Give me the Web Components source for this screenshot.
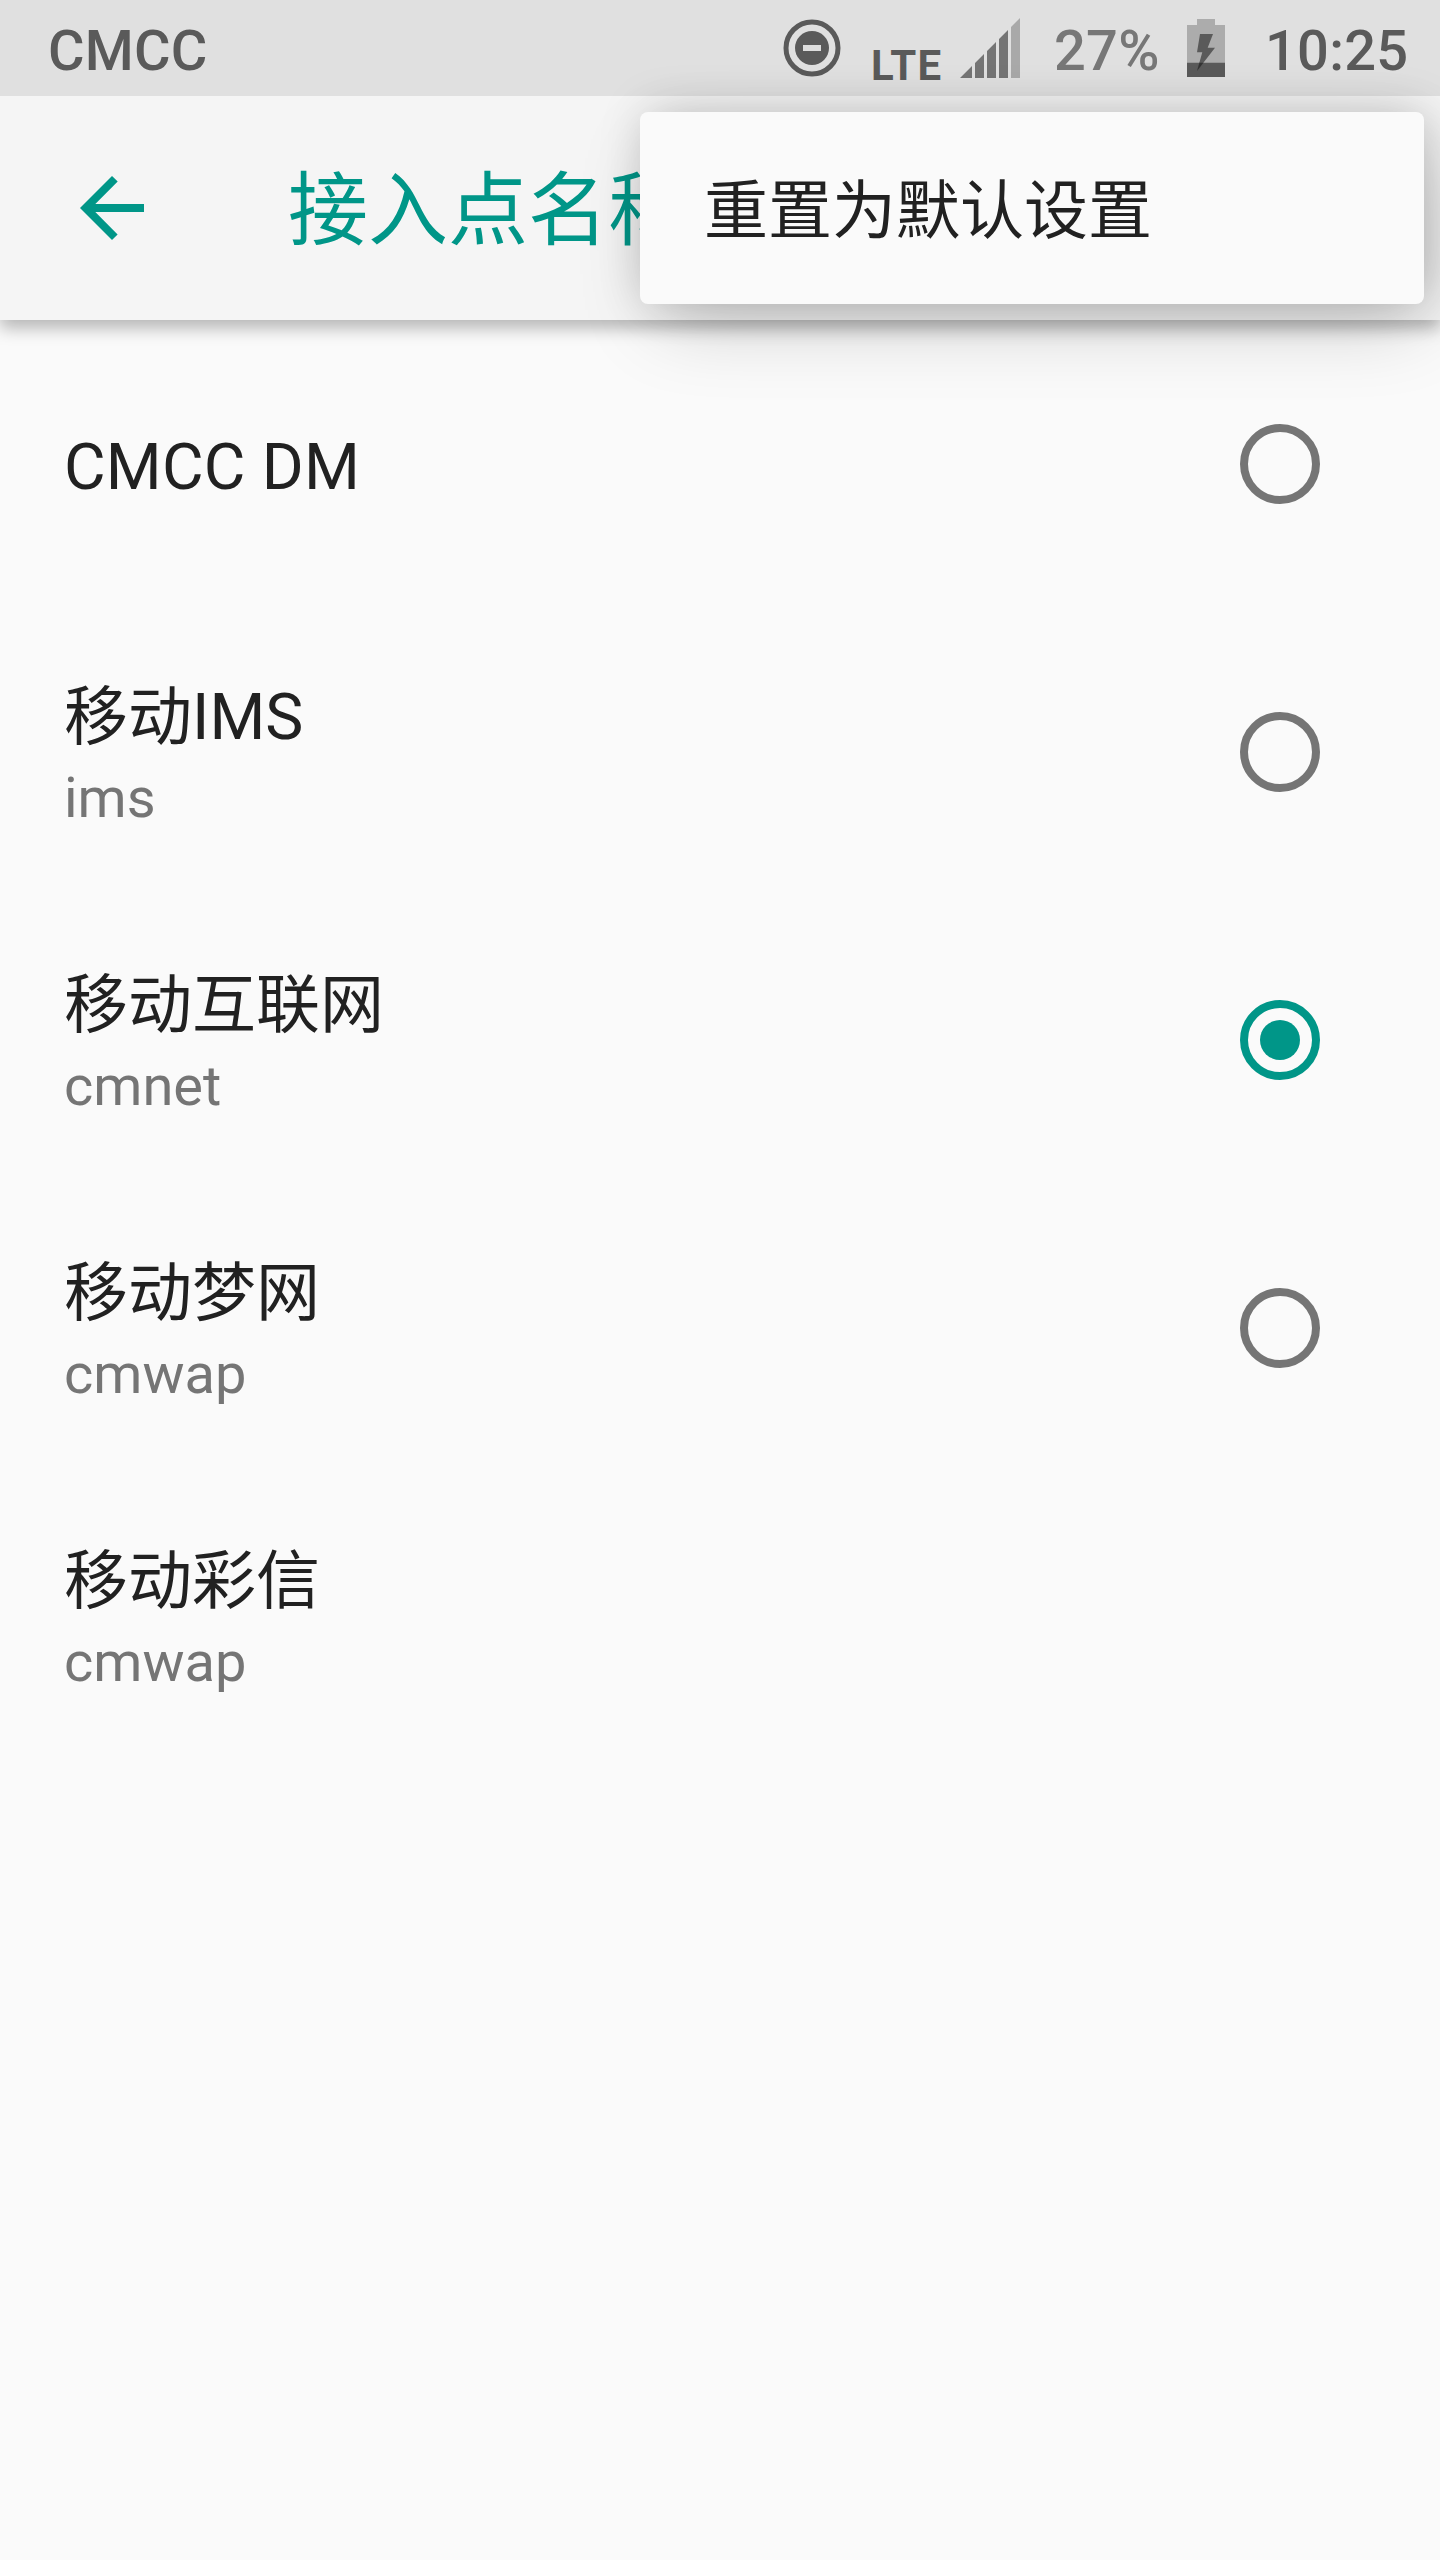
<!DOCTYPE html>
<html lang="zh-CN"><head><meta charset="utf-8"><title>接入点名称</title>
<style>html,body{margin:0;background:#fafafa}body{width:1440px;height:2560px;overflow:hidden;font-family:Roboto,"Noto Sans CJK SC",sans-serif}</style></head><body>
<apn-screen></apn-screen>
<script>
const define=(name,html,fn)=>customElements.define(name,class extends HTMLElement{connectedCallback(){const r=this.attachShadow({mode:'open'});r.innerHTML=html;if(fn)fn(this,r);}});
define('status-bar',`<style>
:host{display:flex;height:96px;background:#e0e0e0;color:#5a5a5a;box-sizing:border-box;padding:0 32px 0 48px;align-items:center;font-size:56px;font-weight:500;line-height:66px;white-space:nowrap}
.sp{flex:1}svg{display:block;flex:none}.c{padding-top:5px;letter-spacing:.25px}.time{width:143px}
.dnd{margin-right:30px}.lte{font-size:42px;font-weight:700;line-height:44px;padding-top:35px;width:89px;letter-spacing:1.2px}.sig{margin-right:34px}.pct{color:#777;padding-top:5px;width:133px;letter-spacing:.25px}.bat{margin-right:40px}
</style><span class="c">CMCC</span><span class="sp"></span>
<svg class="dnd" width="58" height="58" viewBox="0 0 58 58"><circle cx="29" cy="29" r="26" fill="none" stroke="#5a5a5a" stroke-width="5"/><circle cx="29" cy="29" r="17" fill="#5a5a5a"/><rect x="20" y="26" width="18" height="6" fill="#ddd"/></svg>
<span class="lte">LTE</span>
<svg class="sig" width="60" height="60" viewBox="0 0 60 60"><path d="M0 60 12 48V60ZM15 45 24 36V60H15ZM27 33 36 24V60H27ZM39 21 48 12V60H39Z" fill="#757575"/><path d="M51 9 60 0V60H51Z" fill="#a9a9a9"/></svg>
<span class="pct">27%</span>
<svg class="bat" width="38" height="58" viewBox="0 0 38 58"><path d="M0 6H10V0H28V6H38V58H0Z" fill="#acacac"/><path d="M0 43.700H38V58H0Z" fill="#5a5a5a"/><path d="M13 15H26L20.700 28.700H28L10 52 15.300 33.300H10Z" fill="#5a5a5a"/><path d="M12.400 43.700H16.400L10 52Z" fill="#333"/></svg>
<span class="c time">10:25</span>`);
define('app-bar',`<style>
:host{display:flex;position:relative;height:224px;background:#f5f5f5;box-shadow:0 8px 16px rgba(0,0,0,.28);clip-path:inset(0 0 -60px 0);align-items:center;color:#009688}
svg{display:block;margin-left:80px}h1{margin:0 0 0 144px;padding-top:6px;font-size:80px;font-weight:400;line-height:94px}
</style><svg width="64" height="64" viewBox="0 0 64 64"><path d="M64 28H15.300L37.700 5.600 32 0 0 32 32 64l5.600-5.600L15.300 36H64Z" fill="#009688"/></svg><h1><slot></slot></h1>`);
define('popup-menu',`<style>:host{position:absolute;left:640px;top:112px;width:784px;height:192px;border-radius:8px;background:#fafafa;box-shadow:8px 26px 80px -12px rgba(0,0,0,.23),4px -3px 48px -2px rgba(0,0,0,.18);display:flex;align-items:center;box-sizing:border-box;padding:0 0 6px 64px;font-size:64px;color:#212121}</style><slot></slot>`);
define('radio-dot',`<style>:host{display:block}svg{display:block}</style><svg width="80" height="80" viewBox="0 0 80 80"><circle class="o" cx="40" cy="40" r="36" fill="none" stroke-width="8"/></svg>`,(h,r)=>{
 const on=h.hasAttribute('checked'),c=on?'#009688':'#757575';r.querySelector('.o').setAttribute('stroke',c);
 if(on)r.querySelector('svg').insertAdjacentHTML('beforeend','<circle cx="40" cy="40" r="20" fill="#009688"/>');});
define('apn-row',`<style>:host{display:flex;height:288px;align-items:center;box-sizing:border-box;padding:0 120px 0 64px;justify-content:space-between}
.t{font-size:64px;line-height:94px;color:#212121}.t:only-child{padding-top:7px;letter-spacing:.2px}.s{font-size:56px;line-height:66px;padding-bottom:2px;color:#757575}</style><div><div class="t"><slot></slot></div><div class="s"></div></div>`,(h,r)=>{
 const s=r.querySelector('.s');if(h.getAttribute('apn'))s.textContent=h.getAttribute('apn');else s.remove();
 const k=h.getAttribute('radio');if(k)r.insertBefore(Object.assign(document.createElement('div'),{innerHTML:`<radio-dot ${k==='on'?'checked':''}></radio-dot>`}),null);});
define('apn-screen',`<style>:host{display:flex;flex-direction:column;height:2560px;background:#fafafa;position:relative}main{display:block}</style>
<status-bar></status-bar><app-bar>接入点名称</app-bar><main><apn-row radio="off">CMCC DM</apn-row><apn-row radio="off" apn="ims">移动IMS</apn-row><apn-row radio="on" apn="cmnet">移动互联网</apn-row><apn-row radio="off" apn="cmwap">移动梦网</apn-row><apn-row apn="cmwap">移动彩信</apn-row></main><popup-menu>重置为默认设置</popup-menu>`);
</script></body></html>
